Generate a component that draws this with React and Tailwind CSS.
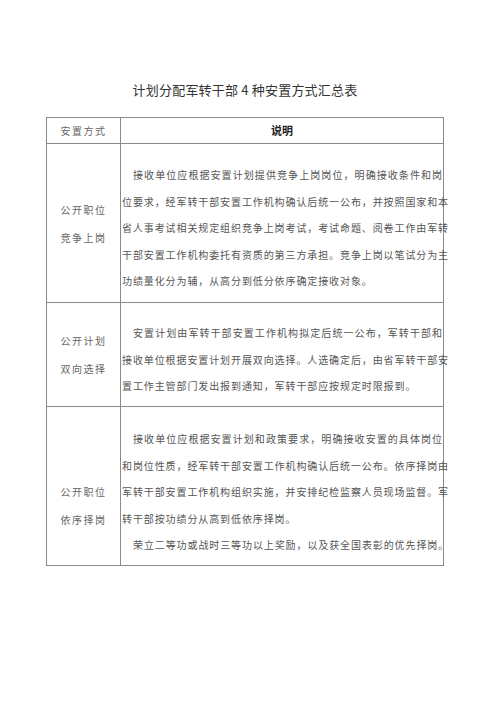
const rows = [
  {
    label: ["公开职位", "竞争上岗"],
    h: "h-[159px]",
    pt: "pt-[18px]",
    lt: "pt-[2px]",
    lines: [
      { t: "接收单位应根据安置计划提供竞争上岗岗位，明确接收条件和岗", indent: true },
      { t: "位要求，经军转干部安置工作机构确认后统一公布，并按照国家和本" },
      { t: "省人事考试相关规定组织竞争上岗考试，考试命题、阅卷工作由军转" },
      { t: "干部安置工作机构委托有资质的第三方承担。竞争上岗以笔试分为主" },
      { t: "功绩量化分为辅，从高分到低分依序确定接收对象。", last: true },
    ],
  },
  {
    label: ["公开计划", "双向选择"],
    h: "h-[104px]",
    pt: "pt-[17px]",
    lt: "pt-[0px]",
    lines: [
      { t: "安置计划由军转干部安置工作机构拟定后统一公布，军转干部和", indent: true },
      { t: "接收单位根据安置计划开展双向选择。人选确定后，由省军转干部安" },
      { t: "置工作主管部门发出报到通知，军转干部应按规定时限报到。", last: true },
    ],
  },
  {
    label: ["公开职位", "依序择岗"],
    h: "h-[158px]",
    pt: "pt-[19px]",
    lt: "pt-[40px]",
    lines: [
      { t: "接收单位应根据安置计划和政策要求，明确接收安置的具体岗位", indent: true },
      { t: "和岗位性质，经军转干部安置工作机构确认后统一公布。依序择岗由" },
      { t: "军转干部安置工作机构组织实施，并安排纪检监察人员现场监督。军" },
      { t: "转干部按功绩分从高到低依序择岗。", last: true },
      { t: "荣立二等功或战时三等功以上奖励，以及获全国表彰的优先择岗。", indent: true },
    ],
  },
];

export default function App() {
  return (
    <div
      className="w-[500px] h-[707px] bg-white overflow-hidden"
      style={{ fontFamily: '"Noto Sans CJK SC", "Noto Sans", sans-serif' }}
    >
      <div className="ml-[46px] w-[398px] pt-[80px]">
        {/* Title */}
        <h1 className="text-center text-[13px] leading-[20px] text-[#333] font-normal tracking-[0.2px]">
          计划分配军转干部 4 种安置方式汇总表
        </h1>

        {/* Table */}
        <div className="mt-[17px] border border-[#8a8a8a]">
          <div className="flex h-[26px] border-b border-[#8a8a8a]">
            <div className="w-[74px] shrink-0 border-r border-[#8a8a8a] flex items-center justify-center text-[10px] tracking-[1.5px] text-[#666]">
              安置方式
            </div>
            <div className="flex-1 flex items-center justify-center text-[11px] font-bold text-[#222]">
              说明
            </div>
          </div>

          {rows.map((r, i) => (
            <div
              key={i}
              className={
                "flex " +
                r.h +
                (i < rows.length - 1 ? " border-b border-[#8a8a8a]" : "")
              }
            >
              <div
                className={
                  "w-[74px] shrink-0 border-r border-[#8a8a8a] flex flex-col items-center justify-center text-[10px] leading-[28px] tracking-[1.5px] text-[#666] " +
                  r.lt
                }
              >
                {r.label.map((l) => (
                  <div key={l}>{l}</div>
                ))}
              </div>
              <div
                className={
                  "flex-1 min-w-0 pl-[1px] text-[10px] leading-[26.5px] tracking-[0.9px] text-[#555] " +
                  r.pt
                }
              >
                {r.lines.map((ln, j) => (
                  <div
                    key={j}
                    className={
                      "whitespace-nowrap " +
                      (ln.indent ? "pl-[11px] " : "") +
                      (ln.last ? "text-left" : "text-justify [text-align-last:justify] whitespace-normal")
                    }
                  >
                    {ln.t}
                  </div>
                ))}
              </div>
            </div>
          ))}
        </div>
      </div>
    </div>
  );
}
